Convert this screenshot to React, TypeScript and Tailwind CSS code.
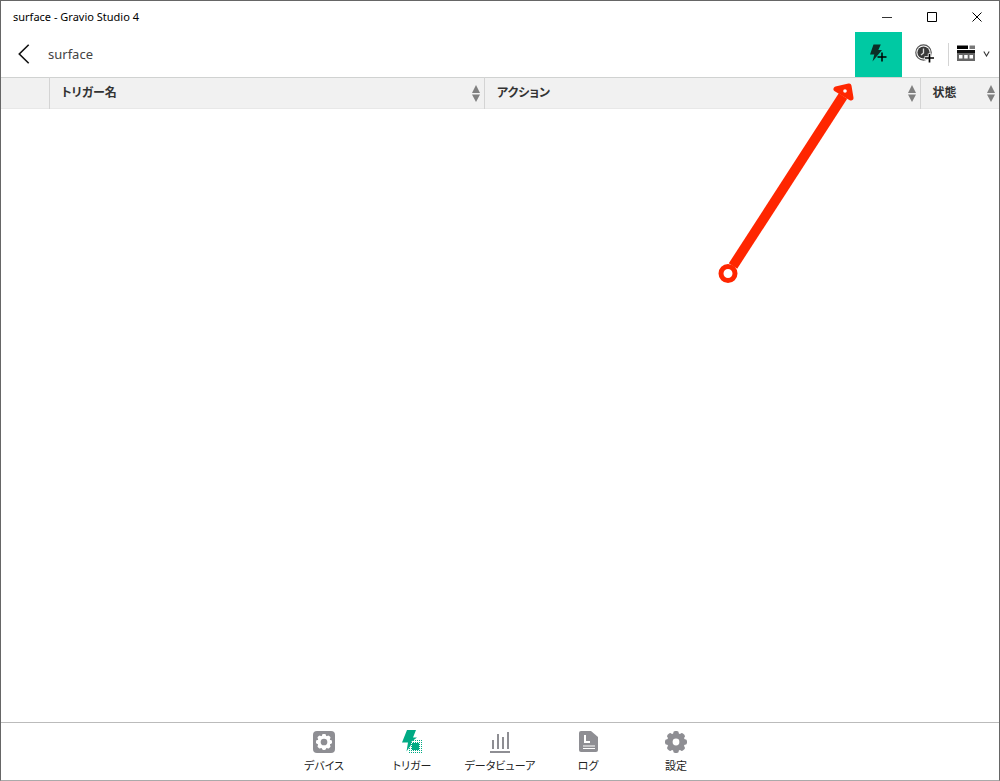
import React, { useState } from "react";

const SortArrows = () => (
  <svg width="8" height="17" viewBox="0 0 8 17" fill="#808080" aria-hidden="true">
    <path d="M4 0 8 8H0Z" />
    <path d="M0 9.5H8L4 17Z" />
  </svg>
);

const ChevronLeft = () => (
  <svg width="12" height="20" viewBox="0 0 12 20" fill="none" stroke="#111" strokeWidth="1.6">
    <path d="M10.7 .7 1.3 10 10.7 19.3" />
  </svg>
);

const TriggerAddIcon = () => (
  <svg width="18" height="20" viewBox="0 0 18 20">
    <path d="M3.5 .5H10.8L8.3 6H12L2.5 17.5 4.3 10.5H0Z" fill="#0b2f27" />
    <path d="M7.5 13H16.5M12 8.5V17.5" stroke="#00c9a3" strokeWidth="2.4" />
    <path d="M7.5 13H16.5M12 8.5V17.5" stroke="#000" strokeWidth="1.5" />
  </svg>
);

const TimerAddIcon = () => (
  <svg width="20" height="20" viewBox="0 0 20 20" fill="none">
    <circle cx="8.5" cy="8.5" r="7.7" stroke="#555" strokeWidth="1.2" />
    <circle cx="8.5" cy="8.5" r="6.1" fill="#3a3a3a" />
    <path d="M8.5 4.5V9L6 11" stroke="#ddd" strokeWidth="1.3" />
    <path d="M9.5 14H19.5M14.5 9.5V19" stroke="#fff" strokeWidth="3.4" />
    <path d="M10 14H19M14.5 10V18.5" stroke="#000" strokeWidth="1.7" />
  </svg>
);

const LayoutIcon = () => (
  <svg width="18" height="17" viewBox="0 0 18 17">
    <path d="M0 .5H11V4H0Z" fill="#000" />
    <path d="M12.5 .5H18V4H12.5Z" fill="#777" />
    <path d="M0 5H18V8H0Z" fill="#111" />
    <path d="M0 8H18V16H0Z" fill="#666" />
    <path d="M2 10H5.5V13.5H2ZM7.2 10H10.7V13.5H7.2ZM12.5 10H16V13.5H12.5Z" fill="#fff" />
  </svg>
);

// eight round teeth around a disc, the hole takes the colour behind it
const Gear = ({ size, color, hole }: { size: number; color: string; hole: string }) => (
  <g transform={`scale(${size / 22})`}>
    {[0, 45, 90, 135].map((angle) => (
      <rect key={angle} x="-2.8" y="-11" width="5.6" height="22" rx="2" fill={color} transform={`rotate(${angle})`} />
    ))}
    <circle r="9" fill={color} />
    <circle r={hole === "#fff" ? 3.4 : 4.6} fill={hole} />
  </g>
);

const DeviceIcon = () => (
  <svg width="22" height="24" viewBox="-11 -12 22 24">
    <rect x="-11" y="-11" width="22" height="22" rx="4" fill="#8e8e93" />
    <Gear size={16} color="#fff" hole="#8e8e93" />
  </svg>
);

const dots = [0, 2, 4, 6, 8, 10, 12];

const TriggerIcon = () => (
  <svg width="20" height="24" viewBox="0 0 20 24" fill="#00aa84">
    <path d="M5 0H14L11 7.5H15L9 12V15L4.5 21.5 6 12.5H0Z" />
    <rect x="10" y="13" width="7" height="7" />
    {dots.map((x) =>
      dots.map((y) => <rect key={`${x}-${y}`} x={x + 7} y={y + 10} width="1" height="1" />)
    )}
  </svg>
);

const ChartIcon = () => (
  <svg width="20" height="24" viewBox="0 0 20 24" stroke="#8e8e93" strokeWidth="2">
    <path d="M3 10V19M8 4V19M13 7V19M18 2V19M0 22H20" />
  </svg>
);

const LogIcon = () => (
  <svg width="19" height="24" viewBox="0 0 19 24">
    <path d="M2 1H12L19 7V20Q19 22 17 22H2Q0 22 0 20V3Q0 1 2 1Z" fill="#8e8e93" />
    <path d="M6 5V12H11" fill="none" stroke="#fff" strokeWidth="2" />
    <path d="M4 16H16M4 18.5H16" stroke="#fff" strokeWidth="1.1" />
  </svg>
);

const SettingsIcon = () => (
  <svg width="22" height="24" viewBox="-11 -12 22 24">
    <Gear size={22} color="#8e8e93" hole="#fff" />
  </svg>
);

const tabs = [
  { label: "デバイス", Icon: DeviceIcon },
  { label: "トリガー", Icon: TriggerIcon },
  { label: "データビューア", Icon: ChartIcon },
  { label: "ログ", Icon: LogIcon },
  { label: "設定", Icon: SettingsIcon },
];

const columns = [
  { label: "トリガー名", width: "" },
  { label: "アクション", width: "" },
  { label: "状態", width: "w-[79px]" },
];

const TitleBar = () => (
  <header className="flex h-[31px] items-center justify-between pl-3">
    <h1 className="pt-px text-[11px] text-black">surface - Gravio Studio 4</h1>
    <div className="flex h-full">
      <button aria-label="Minimize" className="flex w-[45px] items-center justify-center">
        <svg width="10" height="10" stroke="#333"><path d="M0 5.5H10" /></svg>
      </button>
      <button aria-label="Maximize" className="flex w-[45px] items-center justify-center">
        <svg width="10" height="10" fill="none" stroke="#000"><path d="M.5 .5H9.5V9.5H.5Z" /></svg>
      </button>
      <button aria-label="Close" className="flex w-[45px] items-center justify-center">
        <svg width="10" height="10" stroke="#000"><path d="M.5 .5 9.5 9.5M9.5 .5 .5 9.5" /></svg>
      </button>
    </div>
  </header>
);

const Toolbar = () => (
  <div className="flex h-[45px] items-center">
    <button aria-label="Back" className="flex h-full w-[47px] items-center justify-center pr-0.5 pb-0.5">
      <ChevronLeft />
    </button>
    <h2 className="flex-1 text-[13px] text-[#444]">surface</h2>
    <button aria-label="Add trigger" className="flex h-full w-[47px] items-center justify-center bg-[#00c9a3] pb-0.5">
      <TriggerAddIcon />
    </button>
    <button aria-label="Add timer" className="flex h-full w-[46px] items-center justify-center pb-0.5">
      <TimerAddIcon />
    </button>
    <div className="h-[23px] w-px bg-[#d4d4d4]" />
    <button aria-label="Layout" className="flex h-full w-[50px] items-center gap-2 pb-0.5 pl-2">
      <LayoutIcon />
      <svg width="7" height="6" fill="none" stroke="#333" strokeWidth="1.1"><path d="M.8 .5 3.5 5 6.2 .5" /></svg>
    </button>
  </div>
);

const Pointer = () => (
  <svg
    className="pointer-events-none absolute top-20 right-[141px]"
    width="142"
    height="208"
    viewBox="716 81 142 208"
    fill="none"
    stroke="#ff2600"
    aria-hidden="true"
  >
    <path d="M733 266 843 96" strokeWidth="10" />
    <path d="M836 89 849 86 851 98Z" fill="#ff2600" strokeWidth="5" strokeLinejoin="round" />
    <circle cx="845" cy="91" r="1.8" fill="#fff" stroke="none" />
    <circle cx="728" cy="273.5" r="7" fill="#fff" strokeWidth="5" />
  </svg>
);

export default function App() {
  const [active, setActive] = useState(1);

  return (
    <div className="relative flex min-h-screen flex-col border border-[#666] border-b-[#aaa] bg-white font-['Noto_Sans','Noto_Sans_CJK_JP',sans-serif] [font-feature-settings:'palt']">
      <TitleBar />
      <Toolbar />
      <main className="flex-1">
        <table className="w-full table-fixed border-collapse bg-[#f1f1f1]">
          <thead>
            <tr className="h-[31px] border-t border-b border-t-[#d0d2d1] border-b-[#e8e8e8]">
              <th className="w-[48px]" aria-label="選択" />
              {columns.map(({ label, width }) => (
                <th key={label} className={`border-l border-[#d4d4d4] p-0 ${width}`}>
                  <button className="flex w-full items-center justify-between pr-1 pl-3 text-xs leading-4 font-bold text-[#333]">
                    {label}
                    <SortArrows />
                  </button>
                </th>
              ))}
            </tr>
          </thead>
        </table>
      </main>
      <nav className="flex h-[58px] justify-center border-t border-[#bbb]">
        {tabs.map(({ label, Icon }, index) => (
          <button
            key={label}
            aria-pressed={index === active}
            onClick={() => setActive(index)}
            className="flex w-[88px] flex-col items-center gap-1 pt-[7px] text-[11px] leading-4 whitespace-nowrap text-[#222]"
          >
            <Icon />
            {label}
          </button>
        ))}
      </nav>
      <Pointer />
    </div>
  );
}
